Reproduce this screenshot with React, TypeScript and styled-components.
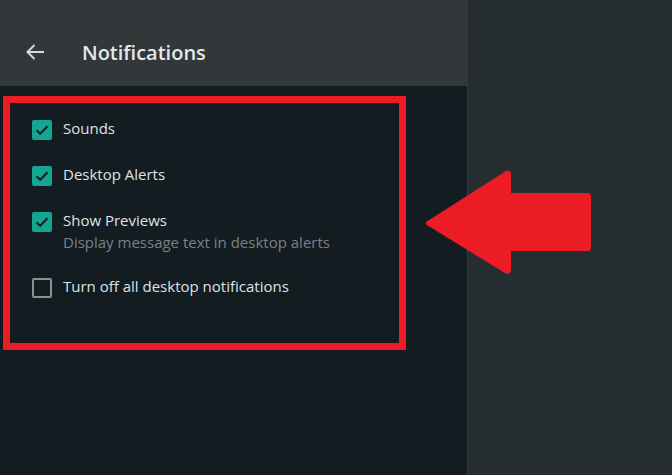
import React from "react";
import styled, { createGlobalStyle } from "styled-components";

const Global = createGlobalStyle`
  html, body { margin: 0; padding: 0; background: #262d31; }
  body { font-family: "Open Sans", "Noto Sans", sans-serif; }
  * { box-sizing: border-box; }
`;

const Page = styled.div`
  position: relative;
  display: flex;
  width: 672px;
  height: 475px;
  overflow: hidden;
  background: #262d31;
`;

const Sidebar = styled.div`
  width: 468px;
  flex: none;
  display: flex;
  flex-direction: column;
  background: #131c21;
  border-right: 1px solid #353c40;
`;

const Main = styled.div`
  flex: 1;
  background: #262d31;
`;

const Header = styled.header`
  height: 86px;
  flex: none;
  display: flex;
  align-items: center;
  padding: 18px 0 0 25px;
  background: #323739;
  color: #e1e5e7;
`;

const BackButton = styled.span`
  display: flex;
  width: 20px;
  height: 20px;
  margin-right: 37px;
  color: #d6dadc;
`;

const Title = styled.h1`
  margin: 0;
  font-size: 20px;
  font-weight: 600;
  letter-spacing: 0;
  color: #e4e8ea;
`;

const Highlight = styled.section`
  margin: 10px 0 0 3px;
  width: 403px;
  height: 254px;
  border: 7px solid #ec1c24;
  padding: 17px 0 0 22px;
  display: flex;
  flex-direction: column;
  gap: 26px;
`;

const Row = styled.label`
  display: flex;
  align-items: flex-start;
  gap: 11px;
`;

const Box = styled.span<{ $checked: boolean }>`
  flex: none;
  width: 20px;
  height: 20px;
  border-radius: 2px;
  display: flex;
  align-items: center;
  justify-content: center;
  background: ${(p) => (p.$checked ? "#14a693" : "transparent")};
  border: ${(p) => (p.$checked ? "none" : "2px solid #8a9195")};
`;

const Texts = styled.span`
  display: flex;
  flex-direction: column;
  margin-top: -2px;
`;

const Label = styled.span`
  font-size: 15px;
  line-height: 20px;
  color: #dfe3e5;
`;

const Sub = styled.span`
  margin-top: 2px;
  font-size: 15px;
  line-height: 20px;
  color: #7a8185;
`;

const Arrow = styled.svg`
  position: absolute;
  left: 424px;
  top: 169px;
`;

const Check = () => (
  <svg width="16" height="16" viewBox="0 0 16 16">
    <path d="M2.5 8.2 L6.2 11.8 L13.5 4.3" fill="none" stroke="#0f2421" strokeWidth="2.2" />
  </svg>
);

type Item = { label: string; sub?: string; checked: boolean };

const items: Item[] = [
  { label: "Sounds", checked: true },
  { label: "Desktop Alerts", checked: true },
  { label: "Show Previews", sub: "Display message text in desktop alerts", checked: true },
  { label: "Turn off all desktop notifications", checked: false },
];

export default function App() {
  return (
    <Page>
      <Global />
      <Sidebar>
        <Header>
          <BackButton>
            <svg width="20" height="20" viewBox="0 0 20 20">
              <path d="M19 10 H2.5 M9.5 3 L2.5 10 L9.5 17" fill="none" stroke="currentColor" strokeWidth="2" />
            </svg>
          </BackButton>
          <Title>Notifications</Title>
        </Header>
        <Highlight>
          {items.map((it) => (
            <Row key={it.label}>
              <Box $checked={it.checked}>{it.checked && <Check />}</Box>
              <Texts>
                <Label>{it.label}</Label>
                {it.sub && <Sub>{it.sub}</Sub>}
              </Texts>
            </Row>
          ))}
        </Highlight>
      </Sidebar>
      <Main />
      <Arrow width="170" height="110" viewBox="0 0 170 110">
        <path
          d="M3 53.5 L82 3 Q85 1.5 86 5 L86 25 L164 25 Q166 25 166 28 L166 79 Q166 81 164 81 L86 81 L86 101 Q85 105 82 103.5 L3 55 Z"
          fill="#ec1c24"
          stroke="#ec1c24"
          strokeWidth="2"
          strokeLinejoin="round"
        />
      </Arrow>
    </Page>
  );
}
